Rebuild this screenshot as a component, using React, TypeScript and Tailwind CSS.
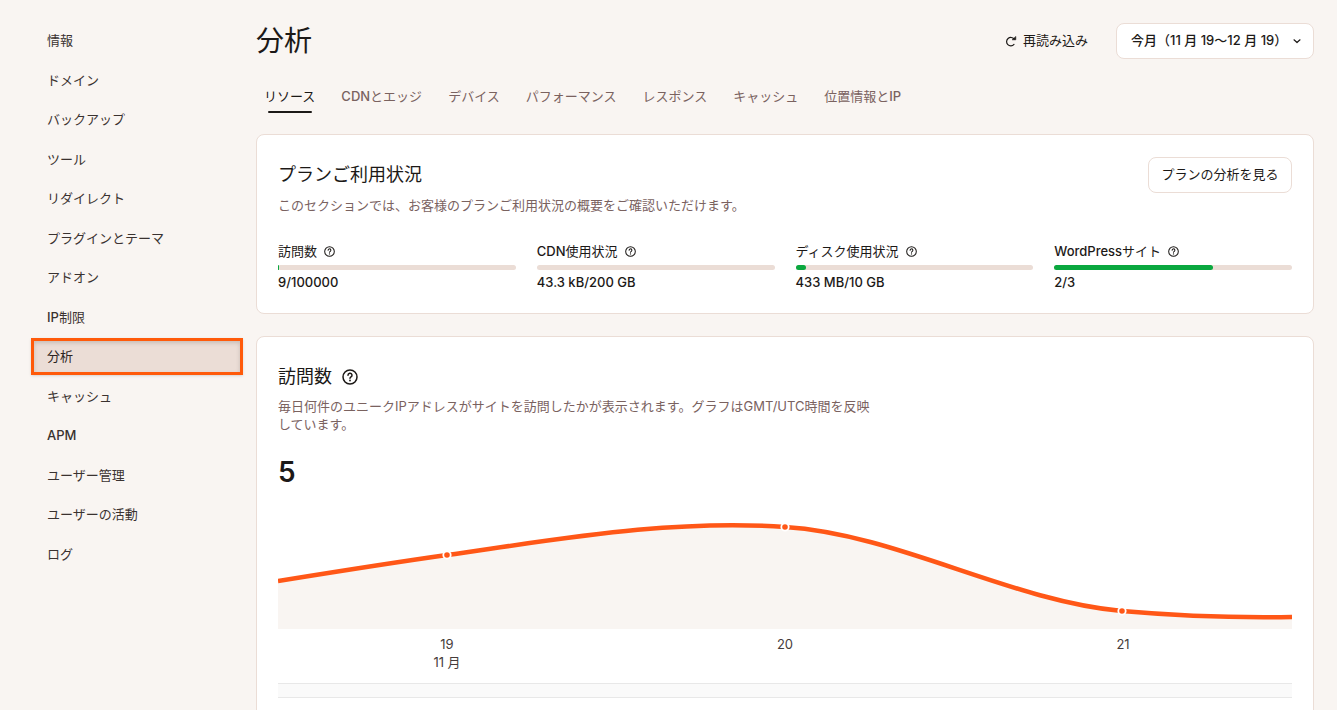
import { ReactNode } from "react";

const menu = [
  "情報",
  "ドメイン",
  "バックアップ",
  "ツール",
  "リダイレクト",
  "プラグインとテーマ",
  "アドオン",
  "IP制限",
  "分析",
  "キャッシュ",
  "APM",
  "ユーザー管理",
  "ユーザーの活動",
  "ログ",
];

const tabs = [
  "リソース",
  "CDNとエッジ",
  "デバイス",
  "パフォーマンス",
  "レスポンス",
  "キャッシュ",
  "位置情報とIP",
];

const usage = [
  { label: "訪問数", value: "9/100000", percent: 0.4 },
  { label: "CDN使用状況", value: "43.3 kB/200 GB", percent: 0 },
  { label: "ディスク使用状況", value: "433 MB/10 GB", percent: 4.3 },
  { label: "WordPressサイト", value: "2/3", percent: 66.7 },
];

const days = [
  { day: "19", month: "11 月" },
  { day: "20" },
  { day: "21" },
];

const curve =
  "M0 81 C56 72 112 63 169 55 C282 39 394 19 507 27 C619 34 732 101 844 111 C901 116 958 118 1014 117";

// Latin runs are set in medium, Japanese stays regular
function Mixed({ text }: { text: string }) {
  return (
    <span>
      {text.split(/([A-Za-z0-9/]+)/).map((part, i) =>
        i % 2 ? (
          <span key={i} className="font-medium">
            {part}
          </span>
        ) : (
          part
        )
      )}
    </span>
  );
}

function HelpIcon({ className }: { className: string }) {
  return (
    <svg
      viewBox="0 0 16 16"
      className={className}
      fill="none"
      stroke="currentColor"
      strokeWidth="1.5"
      strokeLinecap="round"
      strokeLinejoin="round"
      aria-hidden="true"
    >
      <circle cx="8" cy="8" r="7" />
      <path d="M6 6.2a2 2 0 1 1 3 1.7c-.6.4-1 .7-1 1.3" />
      <path d="M8 11.5v.1" strokeWidth="1.8" />
    </svg>
  );
}

function ReloadIcon() {
  return (
    <svg
      viewBox="0 0 12 12"
      className="size-3"
      fill="none"
      stroke="currentColor"
      strokeWidth="1.2"
      strokeLinecap="round"
      strokeLinejoin="round"
      aria-hidden="true"
    >
      <path d="M9 9.4A4.2 4.2 0 1 1 9.2 4.2" />
      <path d="M10.8 1.8V4.8H7.4Z" fill="currentColor" strokeWidth="0.6" />
    </svg>
  );
}

function Card({ children }: { children: ReactNode }) {
  return (
    <section className="rounded-lg border border-[#ebddd6] bg-white px-[21px] pb-[22px]">
      {children}
    </section>
  );
}

function Sidebar() {
  return (
    <nav className="w-64 shrink-0 pt-[21px] pr-[13px] pl-[31px]">
      <ul className="grid min-h-[553px] auto-rows-fr items-center">
        {menu.map((item) => (
          <li key={item}>
            <a
              href="#"
              className={
                item === "分析"
                  ? "flex h-[37px] items-center border-3 border-[#ff5a0a] bg-[#ebddd6] px-[13px] text-[#2c2422] shadow inset-shadow-sm inset-shadow-black/15"
                  : "flex h-[37px] items-center px-4 text-[#3a3230]"
              }
            >
              <Mixed text={item} />
            </a>
          </li>
        ))}
      </ul>
    </nav>
  );
}

function Header() {
  return (
    <header className="flex h-9 items-center justify-between">
      <h1 className="text-[28px] leading-8">分析</h1>
      <div className="flex items-center gap-7">
        <button className="flex items-center gap-1.5">
          <ReloadIcon />
          再読み込み
        </button>
        <div className="relative">
          <select
            aria-label="期間"
            className="h-9 w-[198px] appearance-none rounded-lg border border-[#ebddd6] bg-white pl-[14px] font-medium"
          >
            <option>今月（11 月 19〜12 月 19）</option>
          </select>
          <svg
            viewBox="0 0 8 8"
            className="pointer-events-none absolute top-[14px] right-[13px] size-2"
            fill="none"
            stroke="currentColor"
            strokeWidth="1.2"
            strokeLinecap="round"
            strokeLinejoin="round"
            aria-hidden="true"
          >
            <path d="M1 2.8 4 5.5 7 2.8" />
          </svg>
        </div>
      </div>
    </header>
  );
}

function Tabs() {
  return (
    <div role="tablist" className="mt-7 flex gap-[26px] px-2">
      {tabs.map((tab, i) => (
        <button
          key={tab}
          role="tab"
          aria-selected={i === 0}
          className={
            i === 0
              ? "flex flex-col items-center gap-[5px]"
              : "flex flex-col items-center text-[#7a625f]"
          }
        >
          <span className="leading-[19px]">
            <Mixed text={tab} />
          </span>
          {i === 0 && <span className="h-0.5 w-11 rounded-full bg-[#1c1917]" />}
        </button>
      ))}
    </div>
  );
}

function PlanUsage() {
  return (
    <Card>
      <div className="flex items-start justify-between pt-[22px]">
        <div className="pt-[5px]">
          <h2 className="text-lg leading-[26px]">プランご利用状況</h2>
          <p className="mt-2 leading-[18px] text-[#7a625f]">
            このセクションでは、お客様のプランご利用状況の概要をご確認いただけます。
          </p>
        </div>
        <button className="h-9 w-36 rounded-lg border border-[#ebddd6]">
          プランの分析を見る
        </button>
      </div>
      <dl className="mt-7 grid grid-cols-4 gap-[21px]">
        {usage.map(({ label, value, percent }) => (
          <div key={label}>
            <dt>
              <span className="flex items-center gap-[7px] leading-[18px]">
                <Mixed text={label} />
                <HelpIcon className="size-[11px]" />
              </span>
              <div className="mt-[5px] h-[5px] rounded-full bg-[#ebddd6]">
                <div
                  className="h-full rounded-full bg-[#0aa83f]"
                  style={{ width: `${percent}%` }}
                />
              </div>
            </dt>
            <dd className="mt-[3px] leading-[18px] font-medium">{value}</dd>
          </div>
        ))}
      </dl>
    </Card>
  );
}

function Visits() {
  return (
    <Card>
      <div className="flex items-center gap-[10px] pt-[27px]">
        <h2 className="text-lg leading-[26px]">訪問数</h2>
        <HelpIcon className="size-4" />
      </div>
      <p className="mt-[7px] max-w-[600px] leading-[18px] text-[#7a625f]">
        毎日何件のユニークIPアドレスがサイトを訪問したかが表示されます。グラフはGMT/UTC時間を反映しています。
      </p>
      <p className="mt-[21px] text-[28px] leading-9 font-semibold">5</p>
      <svg
        viewBox="0 0 1014 129"
        preserveAspectRatio="none"
        className="mt-2.5 h-[129px] w-full"
        role="img"
        aria-label="訪問数"
      >
        <path d={`${curve} V129 H0 Z`} fill="#f9f5f2" />
        <path d={curve} fill="none" stroke="#ff5717" strokeWidth="4.5" />
        <g fill="#ff5717" stroke="#fff" strokeWidth="1.8">
          <circle cx="169" cy="55" r="3.7" />
          <circle cx="507" cy="27" r="3.7" />
          <circle cx="844" cy="111" r="3.7" />
        </g>
      </svg>
      <div className="mt-1.5 grid grid-cols-3 text-center leading-[18px] text-[#463c3a]">
        {days.map(({ day, month }) => (
          <div key={day}>
            <p>{day}</p>
            {month && <p>{month}</p>}
          </div>
        ))}
      </div>
      <div className="mt-3 h-[15px] border-y border-[#e8e8e8] bg-[#fafafa]" />
    </Card>
  );
}

export default function App() {
  return (
    <div className="flex h-screen overflow-y-auto bg-[#f9f5f2] font-['Inter','Noto_Sans_CJK_JP',sans-serif] text-[13px] text-[#1c1917] [scrollbar-width:none]">
      <Sidebar />
      <main className="min-w-0 flex-1 pt-[23px] pr-[23px]">
        <Header />
        <Tabs />
        <div className="mt-[21px] flex flex-col gap-[22px]">
          <PlanUsage />
          <Visits />
        </div>
      </main>
    </div>
  );
}
